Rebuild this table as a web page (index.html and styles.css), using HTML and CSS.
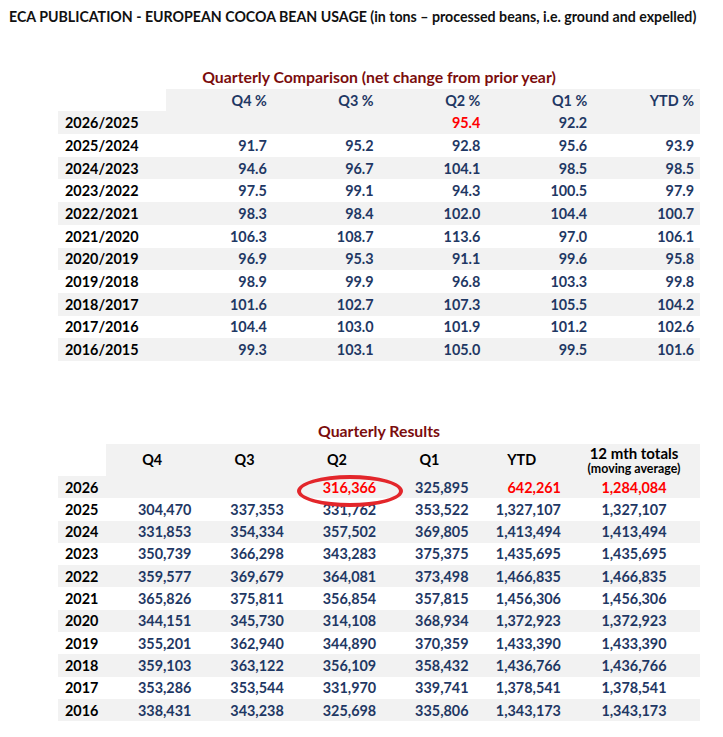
FILE: index.html
```html
<!DOCTYPE html>
<html>
<head>
<meta charset="utf-8">
<link rel="stylesheet" href="styles.css">
</head>
<body>
<div class="page">
  <h1 class="doc-title">ECA PUBLICATION - EUROPEAN COCOA BEAN USAGE (in tons – processed beans, i.e. ground and expelled)</h1>

  <section class="block block-top">
    <h2 class="block-title">Quarterly Comparison (net change from prior year)</h2>
    <div class="tbl tbl-pct">
      <div class="row head"><div class="corner"></div><div class="h">Q4 %</div><div class="h">Q3 %</div><div class="h">Q2 %</div><div class="h">Q1 %</div><div class="h">YTD %</div></div>
      <div class="row"><div class="lbl">2026/2025</div><div></div><div></div><div class="red">95.4</div><div>92.2</div><div></div></div>
      <div class="row"><div class="lbl">2025/2024</div><div>91.7</div><div>95.2</div><div>92.8</div><div>95.6</div><div>93.9</div></div>
      <div class="row"><div class="lbl">2024/2023</div><div>94.6</div><div>96.7</div><div>104.1</div><div>98.5</div><div>98.5</div></div>
      <div class="row"><div class="lbl">2023/2022</div><div>97.5</div><div>99.1</div><div>94.3</div><div>100.5</div><div>97.9</div></div>
      <div class="row"><div class="lbl">2022/2021</div><div>98.3</div><div>98.4</div><div>102.0</div><div>104.4</div><div>100.7</div></div>
      <div class="row"><div class="lbl">2021/2020</div><div>106.3</div><div>108.7</div><div>113.6</div><div>97.0</div><div>106.1</div></div>
      <div class="row"><div class="lbl">2020/2019</div><div>96.9</div><div>95.3</div><div>91.1</div><div>99.6</div><div>95.8</div></div>
      <div class="row"><div class="lbl">2019/2018</div><div>98.9</div><div>99.9</div><div>96.8</div><div>103.3</div><div>99.8</div></div>
      <div class="row"><div class="lbl">2018/2017</div><div>101.6</div><div>102.7</div><div>107.3</div><div>105.5</div><div>104.2</div></div>
      <div class="row"><div class="lbl">2017/2016</div><div>104.4</div><div>103.0</div><div>101.9</div><div>101.2</div><div>102.6</div></div>
      <div class="row"><div class="lbl">2016/2015</div><div>99.3</div><div>103.1</div><div>105.0</div><div>99.5</div><div>101.6</div></div>
    </div>
  </section>

  <section class="block block-bottom">
    <h2 class="block-title">Quarterly Results</h2>
    <div class="tbl tbl-qty">
      <div class="row head"><div class="corner"></div><div class="h">Q4</div><div class="h">Q3</div><div class="h">Q2</div><div class="h">Q1</div><div class="h">YTD</div><div class="h h-total"><span class="t1">12 mth totals</span><span class="t2">(moving average)</span></div></div>
      <div class="row"><div class="lbl">2026</div><div></div><div></div><div class="red marked">316,366<span class="ring"></span></div><div>325,895</div><div class="red">642,261</div><div class="red tot">1,284,084</div></div>
      <div class="row"><div class="lbl">2025</div><div>304,470</div><div>337,353</div><div>331,762</div><div>353,522</div><div>1,327,107</div><div class="tot">1,327,107</div></div>
      <div class="row"><div class="lbl">2024</div><div>331,853</div><div>354,334</div><div>357,502</div><div>369,805</div><div>1,413,494</div><div class="tot">1,413,494</div></div>
      <div class="row"><div class="lbl">2023</div><div>350,739</div><div>366,298</div><div>343,283</div><div>375,375</div><div>1,435,695</div><div class="tot">1,435,695</div></div>
      <div class="row"><div class="lbl">2022</div><div>359,577</div><div>369,679</div><div>364,081</div><div>373,498</div><div>1,466,835</div><div class="tot">1,466,835</div></div>
      <div class="row"><div class="lbl">2021</div><div>365,826</div><div>375,811</div><div>356,854</div><div>357,815</div><div>1,456,306</div><div class="tot">1,456,306</div></div>
      <div class="row"><div class="lbl">2020</div><div>344,151</div><div>345,730</div><div>314,108</div><div>368,934</div><div>1,372,923</div><div class="tot">1,372,923</div></div>
      <div class="row"><div class="lbl">2019</div><div>355,201</div><div>362,940</div><div>344,890</div><div>370,359</div><div>1,433,390</div><div class="tot">1,433,390</div></div>
      <div class="row"><div class="lbl">2018</div><div>359,103</div><div>363,122</div><div>356,109</div><div>358,432</div><div>1,436,766</div><div class="tot">1,436,766</div></div>
      <div class="row"><div class="lbl">2017</div><div>353,286</div><div>353,544</div><div>331,970</div><div>339,741</div><div>1,378,541</div><div class="tot">1,378,541</div></div>
      <div class="row"><div class="lbl">2016</div><div>338,431</div><div>343,238</div><div>325,698</div><div>335,806</div><div>1,343,173</div><div class="tot">1,343,173</div></div>
    </div>
  </section>
</div>
</body>
</html>
```

FILE: styles.css
```css
* { box-sizing: border-box; }
html, body { margin: 0; padding: 0; background: #ffffff; }
body {
  font-family: Lato, "Liberation Sans", Arial, sans-serif;
  color: #000;
  width: 723px;
  height: 737px;
  overflow: hidden;
}
.page { padding: 7px 0 0 0; }
.doc-title {
  margin: 0 0 0 9px;
  font-size: 14.2px;
  font-weight: 700;
  line-height: 20px;
  white-space: nowrap;
  color: #111;
}
.block { margin-left: 58px; width: 642px; }
.block-top { margin-top: 40px; }
.block-bottom { margin-top: 60px; }
.block-title {
  margin: 0 0 2px 0;
  text-align: center;
  font-size: 15.8px;
  font-weight: 700;
  line-height: 20px;
  color: #7b0d0d;
}
.block-bottom .block-title { margin-bottom: 3px; }

.tbl { font-size: 14.4px; font-weight: 700; color: #1f3864; }
.row { display: grid; align-items: center; }
.tbl-pct .row { grid-template-columns: 108px repeat(5, 1fr); height: 22.7px; }
.tbl-qty .row { grid-template-columns: 48px repeat(5, 92.4px) 1fr; height: 22.3px; }
.tbl-qty .row.head { height: 32px; }
.tbl-pct .row.head { height: 22.4px; }

.row:nth-child(even) { background: #f2f2f2; }
.row.head { background: #f2f2f2; }
.row.head .corner { background: #ffffff; align-self: stretch; }

.tbl-pct .row > div { text-align: right; padding-right: 6px; }
.tbl-pct .row > .lbl { text-align: left; padding-left: 7px; padding-right: 0; color: #000; }
.tbl-qty .row > div { text-align: right; padding-right: 7px; }
.tbl-qty .row > .lbl { text-align: left; padding-left: 7px; padding-right: 0; color: #000; }
.tbl-qty .row > .tot { text-align: center; padding-right: 0; }
.tbl-qty .row.head .h { text-align: center; padding-right: 0; color: #000; }
.tbl-pct .row.head .h { color: #1f3864; }

.h-total { display: flex; flex-direction: column; align-items: center; }
.h-total .t1 { font-size: 15px; line-height: 18px; }
.h-total .t2 { font-size: 12.4px; line-height: 14px; }

.red { color: #ff0000; }
.marked { position: relative; }
.ring {
  position: absolute;
  left: 6px;
  top: -4px;
  width: 106px;
  height: 32px;
  border: 4px solid #e3262b;
  border-radius: 50%;
}
```
